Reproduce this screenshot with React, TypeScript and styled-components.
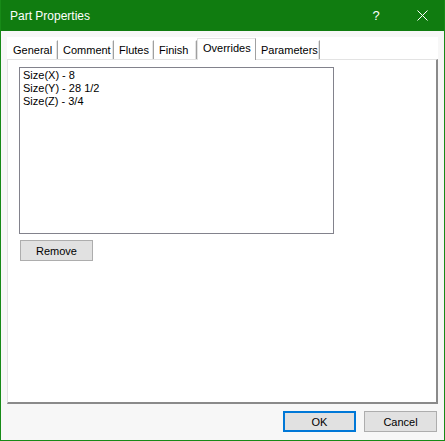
import styled, { createGlobalStyle } from "styled-components";

const GlobalStyle = createGlobalStyle`
  html, body {
    margin: 0;
    padding: 0;
    background: #f7f7f7;
  }
  * {
    box-sizing: border-box;
  }
`;

const Window = styled.div`
  width: 445px;
  height: 441px;
  border: 1px solid #178a17;
  border-top: none;
  display: flex;
  flex-direction: column;
  background: #f7f7f7;
  font-family: "Liberation Sans", Arial, sans-serif;
  font-size: 11px;
  color: #000;
  overflow: hidden;
`;

const TitleBar = styled.div`
  height: 31px;
  margin: 0 -1px;
  background: #107c10;
  color: #fff;
  display: flex;
  align-items: center;
  padding-left: 10px;
  flex-shrink: 0;
`;

const Title = styled.span`
  flex: 1;
  font-size: 12px;
  padding-top: 1px;
`;

const TitleButton = styled.div`
  width: 46px;
  height: 31px;
  display: flex;
  align-items: center;
  justify-content: center;
  font-size: 13px;
`;

const Body = styled.div`
  flex: 1;
  display: flex;
  flex-direction: column;
  padding: 6px 6px 0 6px;
`;

const TabControl = styled.div`
  width: 431px;
  display: flex;
  flex-direction: column;
`;

const TabStrip = styled.div`
  height: 22px;
  background: #fff;
  display: flex;
  align-items: flex-end;
  padding-left: 1px;
  padding-top: 1px;
`;

const Tab = styled.div<{ $w: number; $active?: boolean }>`
  width: ${(p) => p.$w}px;
  height: ${(p) => (p.$active ? 22 : 19)}px;
  background: #fff;
  border-left: 1px solid ${(p) => (p.$active ? "#e3e3e3" : "#fff")};
  border-top: 1px solid ${(p) => (p.$active ? "#e3e3e3" : "#fff")};
  border-right: 1px solid #a0a0a0;
  box-shadow: ${(p) => (p.$active ? "none" : "inset -1px 0 0 #e3e3e3")};
  display: flex;
  align-items: ${(p) => (p.$active ? "flex-start" : "center")};
  padding: ${(p) => (p.$active ? "3px 0 0 5px" : "0 0 0 4px")};
  white-space: nowrap;
  position: relative;
  z-index: ${(p) => (p.$active ? 1 : 0)};
  margin-bottom: ${(p) => (p.$active ? -1 : 0)}px;
`;

const Panel = styled.div`
  height: 345px;
  background: #fff;
  border-top: 1px solid #e3e3e3;
  border-left: 1px solid #e3e3e3;
  border-right: 2px solid #8a8a8a;
  border-bottom: 2px solid #8a8a8a;
  padding: 7px 0 0 11px;
  display: flex;
  flex-direction: column;
  align-items: flex-start;
`;

const ListBox = styled.div`
  width: 315px;
  height: 167px;
  border: 1px solid #82828c;
  background: #fff;
  padding: 1px 3px;
`;

const ListItem = styled.div`
  height: 13px;
  line-height: 13px;
`;

const Button = styled.button<{ $default?: boolean }>`
  width: 73px;
  height: 21px;
  background: #e1e1e1;
  border: ${(p) => (p.$default ? "2px solid #0078d7" : "1px solid #adadad")};
  font-family: "Liberation Sans", Arial, sans-serif;
  font-size: 11px;
  color: #000;
  padding: 0;
  display: flex;
  align-items: center;
  justify-content: center;
`;

const RemoveButton = styled(Button)`
  margin-top: 6px;
  margin-left: 1px;
`;

const Footer = styled.div`
  display: flex;
  justify-content: flex-end;
  gap: 8px;
  padding: 7px 1px 0 0;
`;

const tabs = [
  { label: "General", w: 50 },
  { label: "Comment", w: 56 },
  { label: "Flutes", w: 40 },
  { label: "Finish", w: 43 },
  { label: "Overrides", w: 59, active: true },
  { label: "Parameters", w: 64 },
];

const items = ["Size(X) - 8", "Size(Y) - 28 1/2", "Size(Z) - 3/4"];

export default function App() {
  return (
    <>
      <GlobalStyle />
      <Window>
        <TitleBar>
          <Title>Part Properties</Title>
          <TitleButton>?</TitleButton>
          <TitleButton>
            <svg width="11" height="11" viewBox="0 0 11 11">
              <path d="M0.5 0.5 L10.5 10.5 M10.5 0.5 L0.5 10.5" stroke="#fff" strokeWidth="1" />
            </svg>
          </TitleButton>
        </TitleBar>
        <Body>
          <TabControl>
            <TabStrip>
              {tabs.map((t) => (
                <Tab key={t.label} $w={t.w} $active={t.active}>
                  {t.label}
                </Tab>
              ))}
            </TabStrip>
            <Panel>
              <ListBox>
                {items.map((i) => (
                  <ListItem key={i}>{i}</ListItem>
                ))}
              </ListBox>
              <RemoveButton>Remove</RemoveButton>
            </Panel>
          </TabControl>
          <Footer>
            <Button $default>OK</Button>
            <Button>Cancel</Button>
          </Footer>
        </Body>
      </Window>
    </>
  );
}
